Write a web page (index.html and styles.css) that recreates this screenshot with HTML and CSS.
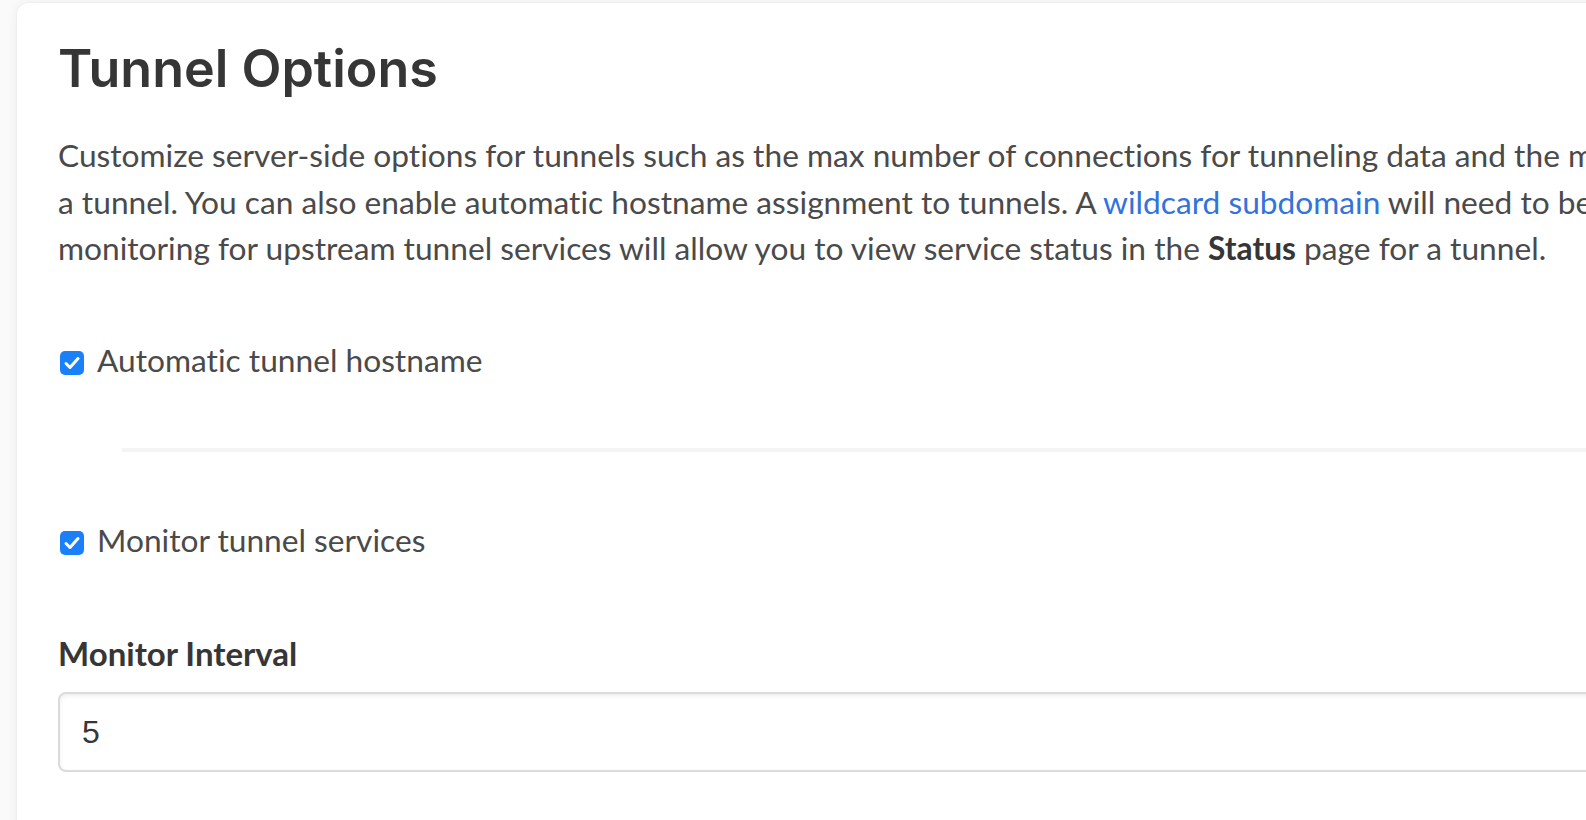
FILE: index.html
```html
<!DOCTYPE html>
<html lang="en">
<head>
    <meta charset="UTF-8">
    <meta name="viewport" content="width=device-width, initial-scale=1.0">
    <title>Tunnel Options</title>
    <link rel="stylesheet" href="styles.css">
</head>
<body>
    <div class="box">
        <h1 class="title">Tunnel Options</h1>
        <p class="intro">
            Customize server-side options for tunnels such as the max number of connections for tunneling data and the max number of clients for<br>
            a tunnel. You can also enable automatic hostname assignment to tunnels. A <a href="#">wildcard subdomain</a> will need to be configured for this to work. Enabling<br>
            monitoring for upstream tunnel services will allow you to view service status in the <strong>Status</strong> page for a tunnel.
        </p>

        <label class="check">
            <input type="checkbox" name="auto_hostname" checked>
            Automatic tunnel hostname
        </label>

        <hr class="divider">

        <label class="check check-monitor">
            <input type="checkbox" name="monitor" checked>
            Monitor tunnel services
        </label>

        <label class="label" for="interval">Monitor Interval</label>
        <input class="input" type="text" id="interval" name="interval" value="5">
    </div>
</body>
</html>
```

FILE: styles.css
```css
body {
    margin: 0;
    background-color: #fafafa;
    font-family: Lato, "Open Sans", sans-serif;
    font-variant-ligatures: none;
    color: #4a4a4a;
    overflow: hidden;
}
.box {
    width: 2600px;
    margin: 3px 0 0 17px;
    padding: 35px 40px 80px 41px;
    background: white;
    border-radius: 12px;
    box-shadow: 0 0 14px rgba(10, 10, 10, 0.06), 0 0 0 1px rgba(10, 10, 10, 0.02);
}
.title {
    font-family: Inter, "Open Sans", sans-serif;
    font-weight: 600;
    font-size: 52px;
    line-height: 61px;
    color: #363636;
    margin: 0;
}
.intro {
    font-size: 31.7px;
    line-height: 46.5px;
    margin: 33px 0 0 0;
}
.intro a {
    color: #3273dc;
    text-decoration: none;
}
.intro strong {
    color: #363636;
    font-weight: 700;
}
.check {
    display: flex;
    align-items: flex-start;
    gap: 13px;
    font-size: 31.7px;
    line-height: 47px;
    margin-top: 65px;
}
.check-monitor {
    margin-top: 64.5px;
}
.check input {
    appearance: none;
    width: 24px;
    height: 24px;
    margin: 14px 0 0 2px;
    border-radius: 5px;
    background: #1a80fa url("data:image/svg+xml;utf8,<svg xmlns='http://www.w3.org/2000/svg' viewBox='0 0 24 24'><path d='M6 12.5l4 4 8-9' fill='none' stroke='white' stroke-width='3' stroke-linecap='round' stroke-linejoin='round'/></svg>") center / 24px 24px no-repeat;
    flex-shrink: 0;
}
.divider {
    border: none;
    height: 4px;
    background: #f4f4f4;
    margin: 64.5px 0 0 64px;
}
.label {
    display: block;
    font-size: 33px;
    line-height: 47px;
    font-weight: 700;
    color: #363636;
    margin-top: 66px;
}
.input {
    display: block;
    box-sizing: border-box;
    width: 100%;
    height: 80px;
    margin-top: 15.5px;
    padding: 0 22px;
    border: 2px solid #dbdbdb;
    border-radius: 8px;
    box-shadow: inset 0 2px 4px rgba(10, 10, 10, 0.07);
    font-family: "Liberation Sans", Arial, sans-serif;
    font-size: 32px;
    color: #363636;
}
```
